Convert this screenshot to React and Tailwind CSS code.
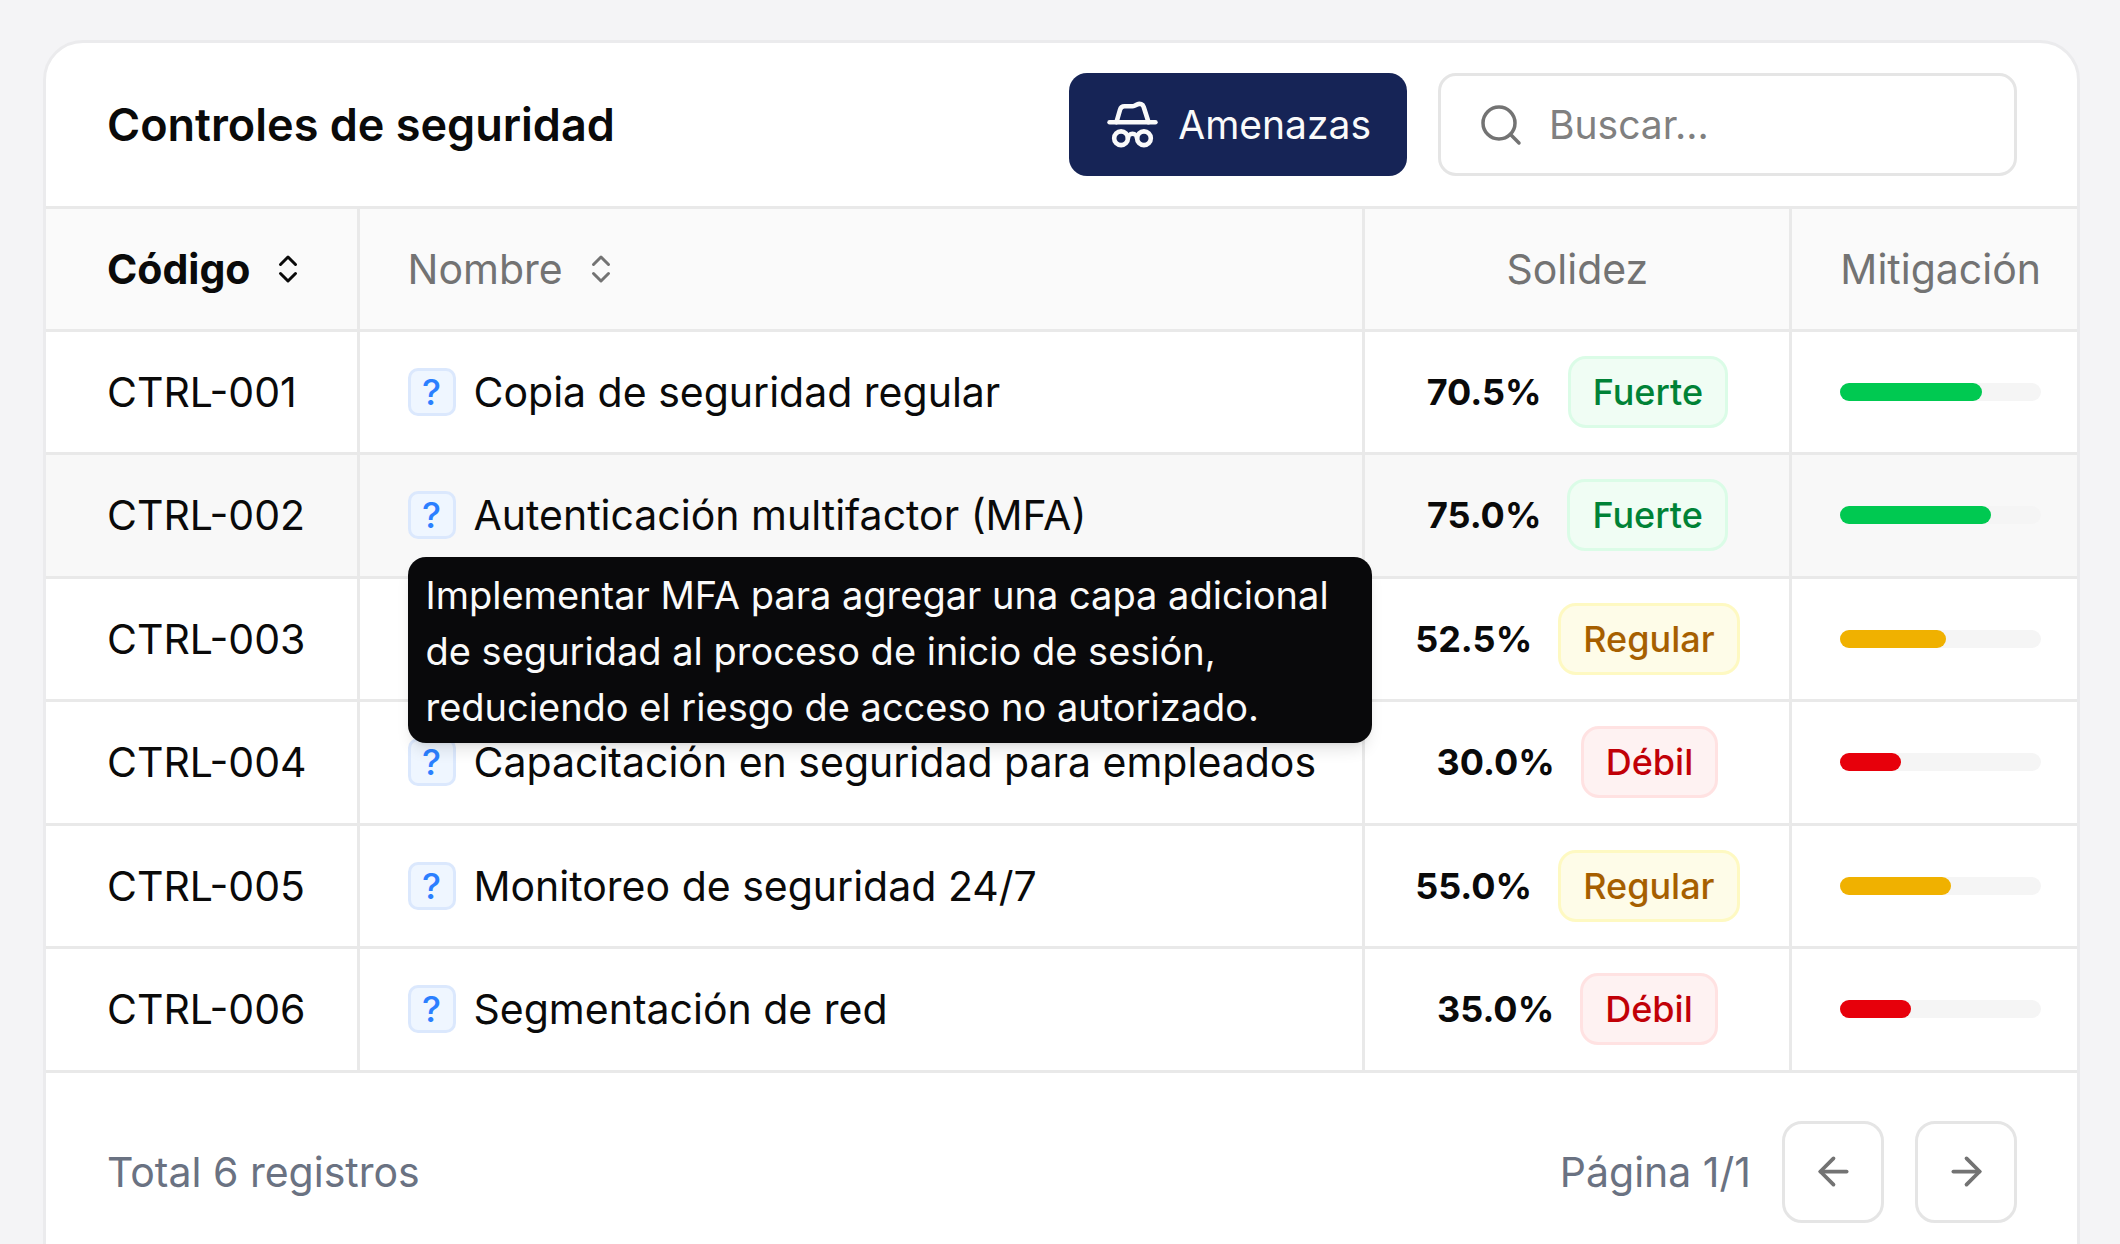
import { ArrowLeft, ArrowRight, ChevronsUpDown, HatGlasses, Search } from "lucide-react";

const controls = [
  { code: "CTRL-001", name: "Copia de seguridad regular", value: 70.5, level: "Fuerte" },
  {
    code: "CTRL-002",
    name: "Autenticación multifactor (MFA)",
    value: 75,
    level: "Fuerte",
    active: true,
    help: "Implementar MFA para agregar una capa adicional de seguridad al proceso de inicio de sesión, reduciendo el riesgo de acceso no autorizado.",
  },
  { code: "CTRL-003", value: 52.5, level: "Regular" },
  { code: "CTRL-004", name: "Capacitación en seguridad para empleados", value: 30, level: "Débil" },
  { code: "CTRL-005", name: "Monitoreo de seguridad 24/7", value: 55, level: "Regular" },
  { code: "CTRL-006", name: "Segmentación de red", value: 35, level: "Débil" },
];

const badgeStyles = {
  Fuerte: "border-green-100 bg-green-50 text-green-700",
  Regular: "border-yellow-100 bg-yellow-50 text-yellow-700",
  Débil: "border-red-100 bg-red-50 text-red-700",
};

const barStyles = {
  Fuerte: "bg-[#00c951]",
  Regular: "bg-[#f0b100]",
  Débil: "bg-[#e7000b]",
};

function SortButton({ children, className = "" }) {
  return (
    <button type="button" className={`flex items-center gap-5 ${className}`}>
      {children}
      <ChevronsUpDown className="size-9" />
    </button>
  );
}

function HelpButton({ text, open }) {
  return (
    <div className="relative flex">
      <button
        type="button"
        aria-label="Ver descripción"
        className="flex size-12 items-center justify-center rounded-[10px] border-3 border-[#dbe8fd] bg-blue-50 text-[36px] leading-none font-medium text-blue-500"
      >
        ?
      </button>
      {open && (
        <div
          role="tooltip"
          className="absolute top-full left-0 z-10 mt-[18px] w-[964px] rounded-[18px] bg-[#09090b] px-[18px] pt-[10px] pb-2 text-[38px] leading-[56px] text-neutral-50 shadow-lg"
        >
          {text}
        </div>
      )}
    </div>
  );
}

function PageButton({ label, children }) {
  return (
    <button
      type="button"
      aria-label={label}
      className="flex size-[102px] items-center justify-center rounded-[20px] border-3 border-[#e5e5e5] text-neutral-500"
    >
      {children}
    </button>
  );
}

export default function App() {
  return (
    <main className="min-h-screen overflow-hidden bg-[#f4f4f6] pt-10 pr-10 pl-[43px] font-['Inter',sans-serif] text-[41px] leading-[56px] text-neutral-950">
      <section className="rounded-[40px] border-3 border-[#ebebed] bg-white pb-20">
        <header className="flex items-center justify-between border-b-3 border-[#e9e9e9] py-[30px] pr-[60px] pl-[61px]">
          <h1 className="text-[45px] font-semibold">Controles de seguridad</h1>
          <div className="flex gap-[31px] text-[39px]">
            <button
              type="button"
              className="flex h-[103px] items-center gap-[18px] rounded-[18px] bg-[#162456] px-9 text-neutral-50"
            >
              <HatGlasses className="size-[55px]" />
              Amenazas
            </button>
            <label className="flex h-[103px] w-[579px] items-center gap-6 rounded-[18px] border-3 border-[#e5e5e5] px-9 text-neutral-500">
              <Search className="size-12 shrink-0" strokeWidth={1.75} />
              <input
                type="search"
                aria-label="Buscar"
                placeholder="Buscar..."
                className="w-full min-w-0 bg-transparent outline-none placeholder:text-[#808080]"
              />
            </label>
          </div>
        </header>

        <table className="w-full border-collapse text-left">
          <thead className="bg-[#fafafa] text-neutral-500">
            <tr className="h-[121px] border-b-3 border-[#e9e9e9]">
              <th scope="col" className="w-[312px] border-r-3 border-[#e9e9e9] pl-[61px]">
                <SortButton className="font-bold text-neutral-950">Código</SortButton>
              </th>
              <th scope="col" className="border-r-3 border-[#e9e9e9] pl-12 font-normal">
                <SortButton>Nombre</SortButton>
              </th>
              <th scope="col" className="w-[427px] border-r-3 border-[#e9e9e9] text-center font-normal">
                Solidez
              </th>
              <th scope="col" className="w-[285px] pr-9 pl-12 font-normal">
                Mitigación
              </th>
            </tr>
          </thead>
          <tbody>
            {controls.map((control) => (
              <tr
                key={control.code}
                className={`h-[123px] border-b-3 border-[#e9e9e9] even:h-[124px] ${control.active ? "bg-[#f8f8f8]" : ""}`}
              >
                <td className="border-r-3 border-[#e9e9e9] pl-[61px]">{control.code}</td>
                <td className="border-r-3 border-[#e9e9e9] pl-12">
                  {control.name && (
                    <div className="flex items-center gap-[18px]">
                      <HelpButton text={control.help} open={control.active} />
                      {control.name}
                    </div>
                  )}
                </td>
                <td className="border-r-3 border-[#e9e9e9]">
                  <div className="flex items-center justify-center gap-[26px] text-[36px]">
                    <span className="font-bold">{control.value.toFixed(1)}%</span>
                    <span
                      className={`flex h-[72px] items-center rounded-[18px] border-3 px-[22px] font-medium ${badgeStyles[control.level]}`}
                    >
                      {control.level}
                    </span>
                  </div>
                </td>
                <td className="pr-9 pl-12">
                  <div className="h-[18px] rounded-full bg-neutral-100">
                    <div
                      className={`h-full rounded-full ${barStyles[control.level]}`}
                      style={{ width: `${control.value}%` }}
                    />
                  </div>
                </td>
              </tr>
            ))}
          </tbody>
        </table>

        <footer className="flex items-center justify-between pt-12 pr-[60px] pl-[61px] text-gray-500">
          <p>Total 6 registros</p>
          <nav aria-label="Paginación" className="flex items-center gap-[31px]">
            Página 1/1
            <PageButton label="Página anterior">
              <ArrowLeft className="size-[45px]" />
            </PageButton>
            <PageButton label="Página siguiente">
              <ArrowRight className="size-[45px]" />
            </PageButton>
          </nav>
        </footer>
      </section>
    </main>
  );
}
